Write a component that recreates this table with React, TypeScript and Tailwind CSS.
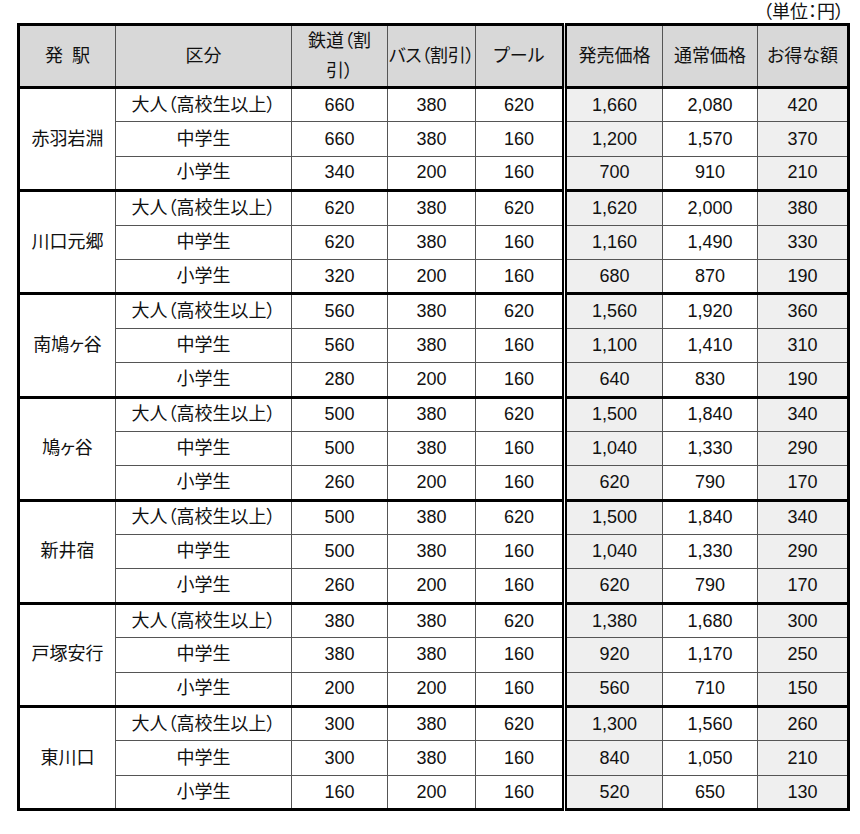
const rows: [string, string[][]][] = [
  ["赤羽岩淵", [
    ["660", "380", "620", "1,660", "2,080", "420"],
    ["660", "380", "160", "1,200", "1,570", "370"],
    ["340", "200", "160", "700", "910", "210"],
  ]],
  ["川口元郷", [
    ["620", "380", "620", "1,620", "2,000", "380"],
    ["620", "380", "160", "1,160", "1,490", "330"],
    ["320", "200", "160", "680", "870", "190"],
  ]],
  ["南鳩ヶ谷", [
    ["560", "380", "620", "1,560", "1,920", "360"],
    ["560", "380", "160", "1,100", "1,410", "310"],
    ["280", "200", "160", "640", "830", "190"],
  ]],
  ["鳩ヶ谷", [
    ["500", "380", "620", "1,500", "1,840", "340"],
    ["500", "380", "160", "1,040", "1,330", "290"],
    ["260", "200", "160", "620", "790", "170"],
  ]],
  ["新井宿", [
    ["500", "380", "620", "1,500", "1,840", "340"],
    ["500", "380", "160", "1,040", "1,330", "290"],
    ["260", "200", "160", "620", "790", "170"],
  ]],
  ["戸塚安行", [
    ["380", "380", "620", "1,380", "1,680", "300"],
    ["380", "380", "160", "920", "1,170", "250"],
    ["200", "200", "160", "560", "710", "150"],
  ]],
  ["東川口", [
    ["300", "380", "620", "1,300", "1,560", "260"],
    ["300", "380", "160", "840", "1,050", "210"],
    ["160", "200", "160", "520", "650", "130"],
  ]],
];

const kinds = ["大人（高校生以上）", "中学生", "小学生"];

// 価格列のうち網掛けにするもの
const shaded = [false, false, false, true, false, true];

const th = "font-normal border border-[#555] border-b-[3px] border-b-black";

export default function App() {
  return (
    <div
      className="w-[860px] min-h-[834px] bg-white pl-[17px] pt-[2px] text-[#111] [font-feature-settings:'palt']"
      style={{ fontFamily: '"Liberation Sans", "Noto Sans CJK JP", sans-serif' }}
    >
      <div className="w-[833px] h-[21px] text-right text-[18px] leading-[21px] pr-[6px]">
        （単位：円）
      </div>

      <table className="w-[833px] table-fixed border-collapse border-[3px] border-black text-[18px] text-center">
        <colgroup>
          <col className="w-[97px]" />
          <col className="w-[176px]" />
          <col className="w-[96px]" />
          <col className="w-[88px]" />
          <col className="w-[89px]" />
          <col className="w-[98px]" />
          <col className="w-[95px]" />
          <col className="w-[91px]" />
        </colgroup>
        <thead>
          <tr className="h-[62px] bg-[#d8d8d8]">
            <th className={th}>発&ensp;駅</th>
            <th className={th}>区分</th>
            <th className={th + " leading-[30px] px-[7px]"}>鉄道（割引）</th>
            <th className={th + " whitespace-nowrap tracking-[-0.3px]"}>バス（割引）</th>
            <th className={th + " border-r-[5px] border-r-black [border-right-style:double]"}>プール</th>
            <th className={th}>発売価格</th>
            <th className={th}>通常価格</th>
            <th className={th}>お得な額</th>
          </tr>
        </thead>
        <tbody>
          {rows.map(([station, group]) =>
            group.map((vals, i) => (
              <tr key={station + i} className="h-[34.4px]">
                {i === 0 && (
                  <td
                    rowSpan={3}
                    className="border border-[#555] border-t-[3px] border-t-black border-b-[3px] border-b-black"
                  >
                    {station}
                  </td>
                )}
                <td
                  className={
                    "border border-[#555] " +
                    (i === 0 ? "border-t-[3px] border-t-black " : "") +
                    (i === 2 ? "border-b-[3px] border-b-black" : "")
                  }
                >
                  {kinds[i]}
                </td>
                {vals.map((v, j) => (
                  <td
                    key={j}
                    className={
                      "border border-[#555] " +
                      (i === 0 ? "border-t-[3px] border-t-black " : "") +
                      (i === 2 ? "border-b-[3px] border-b-black " : "") +
                      (j === 2 ? "border-r-[5px] border-r-black [border-right-style:double] " : "") +
                      (shaded[j] ? "bg-[#efefef]" : "")
                    }
                  >
                    {v}
                  </td>
                ))}
              </tr>
            ))
          )}
        </tbody>
      </table>
    </div>
  );
}
